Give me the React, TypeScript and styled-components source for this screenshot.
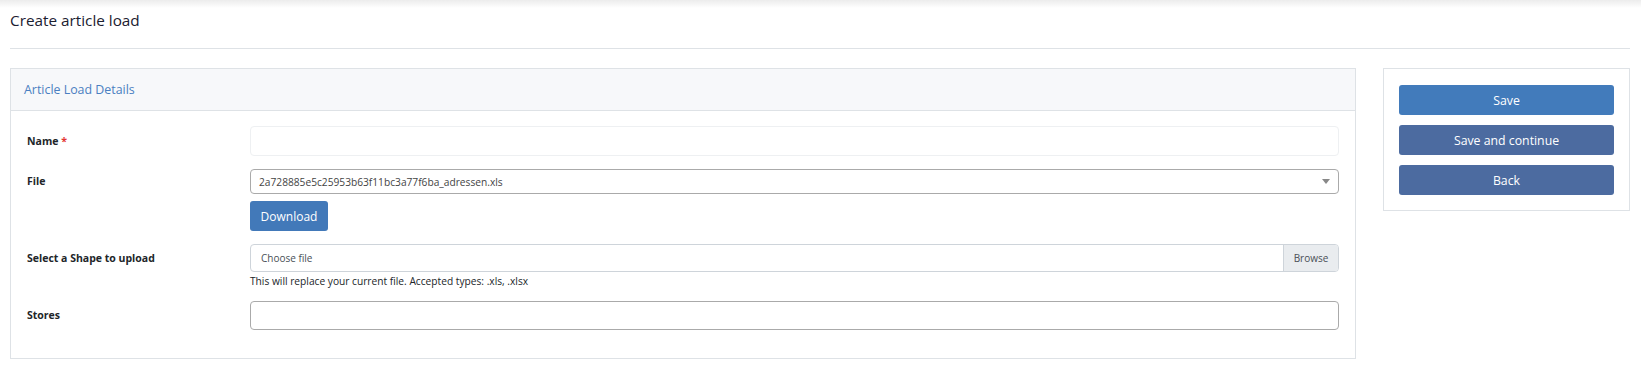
import { ReactElement } from 'react';
import styled, { createGlobalStyle } from 'styled-components';

/*********************************************************
*   STYLES
*********************************************************/
const GlobalStyle = createGlobalStyle`
    * {
        box-sizing: border-box;
    }

    body {
        margin: 0;
        background: #ffffff;
        font-family: "Open Sans", "Noto Sans", sans-serif;
        color: #212529;
    }
`;

const Page = styled.div`
    min-height: 370px;
    padding: 0 11px 0 10px;
    background: linear-gradient(to bottom, #ececec 0, #ffffff 8px) no-repeat;
`;

const Title = styled.h1`
    margin: 0;
    height: 49px;
    padding-top: 9px;
    font-size: 15.3px;
    font-weight: 500;
    line-height: 22px;
    color: #1b2030;
    border-bottom: 1px solid #dee2e6;
`;

const Row = styled.div`
    display: flex;
    align-items: flex-start;
    gap: 27px;
    margin-top: 19px;
`;

const Panel = styled.section`
    flex: 1;
    border: 1px solid #dee2e6;
    background: #ffffff;
`;

const PanelHeader = styled.header`
    height: 42px;
    padding: 0 13px;
    display: flex;
    align-items: center;
    background: #f7f8fa;
    border-bottom: 1px solid #dee2e6;
    color: #4a7fc1;
    font-size: 12.4px;
`;

const PanelBody = styled.div`
    display: grid;
    grid-template-columns: 223px 1fr;
    row-gap: 13px;
    padding: 15px 16px 28px;
`;

const Label = styled.label<{ lh: number }>`
    font-size: 10.5px;
    font-weight: 700;
    line-height: ${(props) => props.lh}px;
    color: #212529;
`;

const Required = styled.span`
    color: #e3342f;
`;

const Field = styled.div`
    display: flex;
    flex-direction: column;
    align-items: flex-start;
`;

const TextInput = styled.div<{ h: number; border: string }>`
    width: 100%;
    height: ${(props) => props.h}px;
    border: 1px solid ${(props) => props.border};
    border-radius: 4px;
    background: #ffffff;
`;

const Select = styled.div`
    width: 100%;
    height: 25px;
    padding: 0 8px;
    display: flex;
    align-items: center;
    justify-content: space-between;
    border: 1px solid #aaaaaa;
    border-radius: 4px;
    font-size: 10.2px;
    color: #444444;
`;

const Caret = styled.span`
    width: 0;
    height: 0;
    border-left: 4px solid transparent;
    border-right: 4px solid transparent;
    border-top: 5px solid #888888;
`;

const DownloadButton = styled.button`
    margin-top: 7px;
    height: 30px;
    width: 78px;
    padding: 0;
    border: none;
    border-radius: 3px;
    background: #4279b9;
    color: #ffffff;
    font-family: inherit;
    font-size: 12px;
`;

const FileInput = styled.div`
    width: 100%;
    height: 28px;
    display: flex;
    border: 1px solid #ced4da;
    border-radius: 4px;
    font-size: 10px;
    color: #495057;
    overflow: hidden;
`;

const FileName = styled.span`
    flex: 1;
    display: flex;
    align-items: center;
    padding-left: 10px;
`;

const Browse = styled.span`
    width: 55px;
    display: flex;
    align-items: center;
    justify-content: center;
    background: #e9ecef;
    border-left: 1px solid #ced4da;
`;

const HelpText = styled.small`
    margin-top: 2px;
    font-size: 10.2px;
    line-height: 14px;
    color: #212529;
`;

const SideCard = styled.aside`
    width: 247px;
    padding: 16px 15px 15px;
    display: flex;
    flex-direction: column;
    gap: 10px;
    border: 1px solid #dee2e6;
`;

const ActionButton = styled.button<{ primary?: boolean }>`
    height: 30px;
    border: none;
    border-radius: 3px;
    background: ${(props) => props.primary ? '#427bbb' : '#4c6ba0'};
    color: #ffffff;
    font-family: inherit;
    font-size: 12.3px;
`;

/*********************************************************
*   COMPONENT
*********************************************************/
const App = (): ReactElement => {
    return (
        <Page>
            <GlobalStyle />
            <Title>Create article load</Title>
            <Row>
                <Panel>
                    <PanelHeader>Article Load Details</PanelHeader>
                    <PanelBody>
                        <Label lh={30}>Name <Required>*</Required></Label>
                        <Field>
                            <TextInput h={30} border="#eef0f2" />
                        </Field>

                        <Label lh={25}>File</Label>
                        <Field>
                            <Select>
                                <span>2a728885e5c25953b63f11bc3a77f6ba_adressen.xls</span>
                                <Caret />
                            </Select>
                            <DownloadButton>Download</DownloadButton>
                        </Field>

                        <Label lh={28}>Select a Shape to upload</Label>
                        <Field>
                            <FileInput>
                                <FileName>Choose file</FileName>
                                <Browse>Browse</Browse>
                            </FileInput>
                            <HelpText>This will replace your current file. Accepted types: .xls, .xlsx</HelpText>
                        </Field>

                        <Label lh={29}>Stores</Label>
                        <Field>
                            <TextInput h={29} border="#aaaaaa" />
                        </Field>
                    </PanelBody>
                </Panel>
                <SideCard>
                    <ActionButton primary>Save</ActionButton>
                    <ActionButton>Save and continue</ActionButton>
                    <ActionButton>Back</ActionButton>
                </SideCard>
            </Row>
        </Page>
    );
};

/*********************************************************
*   EXPORT
*********************************************************/
export default App;
